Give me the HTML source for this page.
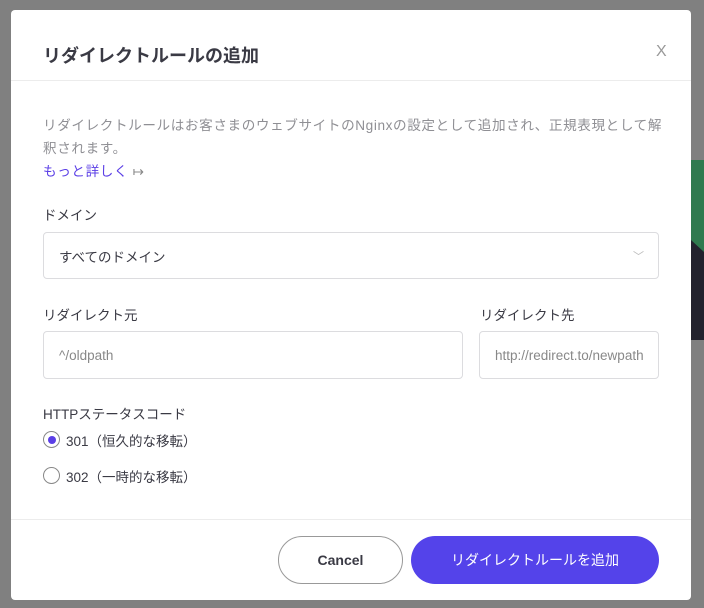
<!DOCTYPE html>
<html><head><meta charset="utf-8"><style>
*{box-sizing:border-box;margin:0;padding:0}
body{width:704px;height:608px;background:#808080;position:relative;overflow:hidden;font-family:"Liberation Sans","Noto Sans CJK JP",sans-serif}
.modal{position:absolute;left:11px;top:10px;width:680px;height:590px;background:#fff;border-radius:4px}
.t{position:absolute;left:32px;top:32px;font-size:18px;font-weight:bold;color:#3a3a44}
.x{position:absolute;left:645px;top:33px;font-size:16px;color:#999;font-weight:300}
.hr{position:absolute;left:0;right:0;height:1px;background:#ececec}
.desc{position:absolute;left:32px;top:104px;width:640px;font-size:13.6px;line-height:23px;color:#8f8f94;letter-spacing:0.6px}
.lnk{color:#5b3fe6}
.lbl{position:absolute;font-size:13.5px;color:#3a3a44}
.inp{position:absolute;border:1px solid #dcdcdf;border-radius:4px;font-size:13.5px;padding-left:15px;display:flex;align-items:center}
.rad{position:absolute;left:32px;width:17px;height:17px;border:1px solid #888;border-radius:50%}
.btn{position:absolute;top:526px;height:48px;border-radius:24px;display:flex;align-items:center;justify-content:center;font-size:14px}
</style></head><body>
<svg style="position:absolute;left:600px;top:140px" width="104" height="220"><circle cx="190" cy="110" r="100" fill="#2f7a4f"/><path d="M91 100 L104 100 L104 200 L91 200Z" fill="#22222e"/><path d="M91 20 L91 100 L104 112 L104 20Z" fill="#2f7a4f"/></svg>
<div class="modal">
<div class="t">リダイレクトルールの追加</div>
<div class="x">X</div>
<div class="hr" style="top:70px"></div>
<div class="desc">リダイレクトルールはお客さまのウェブサイトのNginxの設定として追加され、正規表現として解<br>釈されます。<br><span class="lnk">もっと詳しく</span> <span style="color:#888">↦</span></div>
<div class="lbl" style="left:32px;top:194px">ドメイン</div>
<div class="inp" style="left:32px;top:222px;width:616px;height:47px;color:#3a3a44">すべてのドメイン<span style="position:absolute;right:14px;color:#bbb;font-size:11px">﹀</span></div>
<div class="lbl" style="left:32px;top:294px">リダイレクト元</div>
<div class="inp" style="left:32px;top:321px;width:420px;height:48px;color:#888">^/oldpath</div>
<div class="lbl" style="left:469px;top:294px">リダイレクト先</div>
<div class="inp" style="left:468px;top:321px;width:180px;height:48px;color:#888;overflow:hidden;white-space:nowrap">http://redirect.to/newpath</div>
<div class="lbl" style="left:32px;top:393px">HTTPステータスコード</div>
<div class="rad" style="top:421px"><div style="position:absolute;left:3.5px;top:3.5px;width:8px;height:8px;border-radius:50%;background:#5b3fe6"></div></div>
<div class="lbl" style="left:55px;top:420px">301（恒久的な移転）</div>
<div class="rad" style="top:457px"></div>
<div class="lbl" style="left:55px;top:456px">302（一時的な移転）</div>
<div class="hr" style="top:509px"></div>
<div class="btn" style="left:267px;width:125px;border:1px solid #999;color:#3a3a44;font-weight:bold">Cancel</div>
<div class="btn" style="left:400px;width:248px;background:#5443ea;color:#fff">リダイレクトルールを追加</div>
</div>
</body></html>
